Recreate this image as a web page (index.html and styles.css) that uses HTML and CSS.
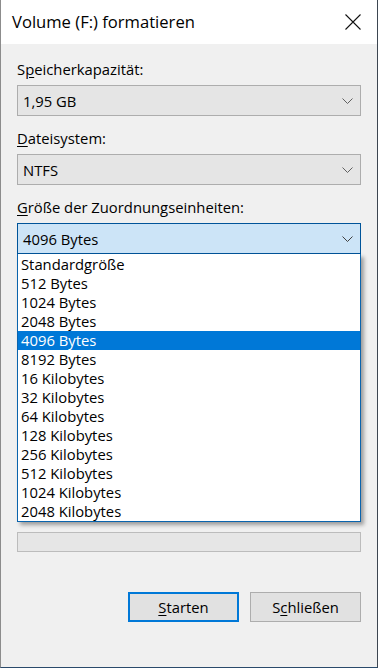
FILE: index.html
```html
<!DOCTYPE html>
<html lang="de">
<head>
    <meta charset="UTF-8">
    <meta name="viewport" content="width=device-width, initial-scale=1.0">
    <title>Volume (F:) formatieren</title>
    <link rel="stylesheet" href="styles.css">
</head>
<body>
<div class="dialog">
    <div class="titlebar">
        <span class="title">Volume (F:) formatieren</span>
        <span class="close">
            <svg width="16" height="16" viewBox="0 0 16 16">
                <path d="M0.5 0.5L15.5 15.5M15.5 0.5L0.5 15.5" stroke="#111" stroke-width="1.1" fill="none"/>
            </svg>
        </span>
    </div>
    <div class="content">
        <div class="field">
            <label>S<u>p</u>eicherkapazität:</label>
            <div class="combo">
                <span>1,95 GB</span>
                <svg class="chev" width="11" height="6" viewBox="0 0 11 6"><path d="M0.5 0.5L5.5 5.5L10.5 0.5" stroke="#606060" fill="none"/></svg>
            </div>
        </div>
        <div class="field">
            <label><u>D</u>ateisystem:</label>
            <div class="combo">
                <span>NTFS</span>
                <svg class="chev" width="11" height="6" viewBox="0 0 11 6"><path d="M0.5 0.5L5.5 5.5L10.5 0.5" stroke="#606060" fill="none"/></svg>
            </div>
        </div>
        <div class="field">
            <label><u>G</u>röße der Zuordnungseinheiten:</label>
            <div class="combo-wrap">
                <div class="combo focus">
                    <span>4096 Bytes</span>
                    <svg class="chev" width="11" height="6" viewBox="0 0 11 6"><path d="M0.5 0.5L5.5 5.5L10.5 0.5" stroke="#404040" fill="none"/></svg>
                </div>
                <!-- aufgeklappte Liste liegt über den restlichen Feldern -->
                <ul class="dropdown">
                    <li>Standardgröße</li>
                    <li>512 Bytes</li>
                    <li>1024 Bytes</li>
                    <li>2048 Bytes</li>
                    <li class="selected">4096 Bytes</li>
                    <li>8192 Bytes</li>
                    <li>16 Kilobytes</li>
                    <li>32 Kilobytes</li>
                    <li>64 Kilobytes</li>
                    <li>128 Kilobytes</li>
                    <li>256 Kilobytes</li>
                    <li>512 Kilobytes</li>
                    <li>1024 Kilobytes</li>
                    <li>2048 Kilobytes</li>
                </ul>
            </div>
        </div>
        <div class="progress"></div>
        <div class="buttons">
            <a href="javascript:;" class="btn default"><u>S</u>tarten</a>
            <a href="javascript:;" class="btn">S<u>c</u>hließen</a>
        </div>
    </div>
</div>
</body>
</html>
```

FILE: styles.css
```css
* {
    margin: 0;
    padding: 0;
    box-sizing: border-box;
}

body {
    font-family: "Open Sans", "Noto Sans", sans-serif;
    font-size: 14.8px;
    color: #000;
    background: #f0f0f0;
}

.dialog {
    width: 378px;
    height: 668px;
    background: #f0f0f0;
    border-left: 1px solid #8c8c8c;
    border-right: 1px solid #3d4651;
    border-bottom: 1px solid #2a4a6b;
}

.titlebar {
    height: 44px;
    background: #fff;
    display: flex;
    align-items: center;
    justify-content: space-between;
    padding: 0 16px 0 11px;
}

.title {
    font-size: 16.6px;
    line-height: 20px;
}

.close {
    display: flex;
    width: 16px;
    height: 16px;
}

.content {
    padding: 3px 16px 0 16px;
}

.field {
    margin-top: 12px;
}

.field label {
    display: block;
    line-height: 20px;
    margin-bottom: 6px;
}

.field u,
.btn u {
    text-decoration-thickness: 1px;
    text-underline-offset: 2px;
}

.combo {
    height: 31px;
    background: #e5e5e5;
    border: 1px solid #adadad;
    display: flex;
    align-items: center;
    justify-content: space-between;
    padding: 0 7px 0 5px;
    line-height: 20px;
}

.combo.focus {
    background: #cce4f7;
    border-color: #005499;
}

.chev {
    display: block;
}

.combo-wrap {
    position: relative;
}

.dropdown {
    position: absolute;
    left: 0;
    right: 0;
    top: 100%;
    list-style: none;
    background: #fff;
    border: 1px solid #0a64ad;
    border-top: 0;
    padding: 1px 0 0 0;
    box-shadow: 3px 3px 4px rgba(0, 0, 0, 0.35);
    z-index: 5;
}

.dropdown li {
    height: 19px;
    line-height: 19px;
    padding-left: 3px;
    white-space: nowrap;
}

.dropdown li.selected {
    background: #0078d7;
    color: #fff;
}

/* Platz der Felder, die von der Liste verdeckt sind */
.progress {
    margin-top: 278px;
    height: 20px;
    background: #e6e6e6;
    border: 1px solid #bcbcbc;
}

.buttons {
    margin-top: 40px;
    display: flex;
    justify-content: flex-end;
    gap: 11px;
}

.btn {
    width: 111px;
    height: 30px;
    display: flex;
    align-items: center;
    justify-content: center;
    background: #e1e1e1;
    border: 1px solid #adadad;
    color: #000;
    text-decoration: none;
}

.btn.default {
    border: 2px solid #0078d7;
}
```
